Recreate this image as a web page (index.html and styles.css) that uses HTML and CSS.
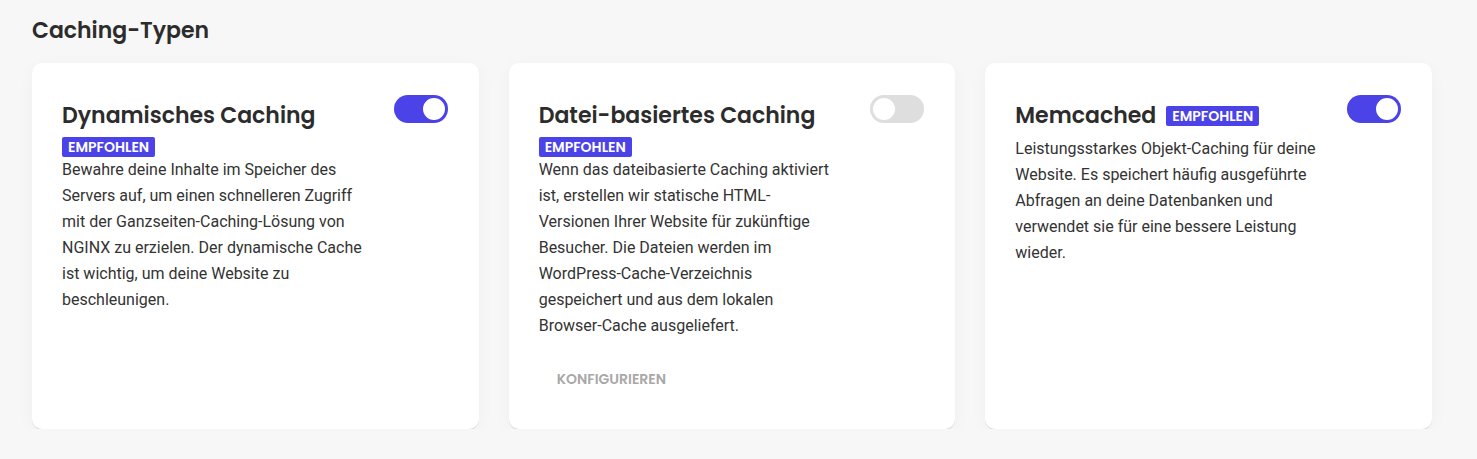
FILE: index.html
```html
<!DOCTYPE html>
<html lang="de">
<head>
<meta charset="utf-8">
<title>Caching-Typen</title>
<link rel="stylesheet" href="styles.css">
</head>
<body>
<main class="page">
  <h2 class="page-title">Caching-Typen</h2>
  <div class="cards">
    <section class="card">
      <div class="card-top">
        <div class="card-head">
          <h3 class="card-title">Dynamisches Caching</h3>
          <span class="badge">EMPFOHLEN</span>
        </div>
        <span class="toggle on"><span class="knob"></span></span>
      </div>
      <p class="card-text">Bewahre deine Inhalte im Speicher des Servers auf, um einen schnelleren Zugriff mit der Ganzseiten-Caching-Lösung von NGINX zu erzielen. Der dynamische Cache ist wichtig, um deine Website zu beschleunigen.</p>
    </section>
    <section class="card">
      <div class="card-top">
        <div class="card-head">
          <h3 class="card-title">Datei-basiertes Caching</h3>
          <span class="badge">EMPFOHLEN</span>
        </div>
        <span class="toggle"><span class="knob"></span></span>
      </div>
      <p class="card-text">Wenn das dateibasierte Caching aktiviert ist, erstellen wir statische HTML-Versionen Ihrer Website für zukünftige Besucher. Die Dateien werden im WordPress-Cache-Verzeichnis gespeichert und aus dem lokalen Browser-Cache ausgeliefert.</p>
      <div class="card-actions"><button class="btn-config" type="button">KONFIGURIEREN</button></div>
    </section>
    <section class="card">
      <div class="card-top">
        <div class="card-head">
          <h3 class="card-title">Memcached</h3>
          <span class="badge">EMPFOHLEN</span>
        </div>
        <span class="toggle on"><span class="knob"></span></span>
      </div>
      <p class="card-text">Leistungsstarkes Objekt-Caching für deine Website. Es speichert häufig ausgeführte Abfragen an deine Datenbanken und verwendet sie für eine bessere Leistung wieder.</p>
    </section>
  </div>
</main>
</body>
</html>
```

FILE: styles.css
```css
* { box-sizing: border-box; }
html, body { margin: 0; padding: 0; }
body {
  background: #f7f7f7;
  font-family: Roboto, "Liberation Sans", sans-serif;
  color: #333;
}
.page {
  padding: 16px 45px 0 32px;
}
.page-title {
  margin: 0;
  font-family: "Poppins", "Open Sans", sans-serif;
  font-weight: 600;
  font-size: 22px;
  line-height: 30px;
  color: #2c2c2c;
}
.cards {
  margin-top: 17px;
  display: grid;
  grid-template-columns: repeat(3, 1fr);
  column-gap: 30px;
}
.card {
  background: #fff;
  border-radius: 10px;
  padding: 32px 31px 30px 30px;
  min-height: 366px;
  box-shadow: 0 1px 0 #dcdcdc, 0 4px 18px rgba(0, 0, 0, 0.035);
}
.card-top {
  display: flex;
  justify-content: space-between;
  align-items: flex-start;
  gap: 20px;
}
.card-head {
  display: flex;
  flex-wrap: wrap;
  align-items: center;
  column-gap: 10px;
  row-gap: 1px;
}
.card-title {
  margin: 0;
  font-family: "Poppins", "Open Sans", sans-serif;
  font-weight: 600;
  font-size: 22px;
  line-height: 41px;
  color: #2c2c2c;
}
.badge {
  display: inline-block;
  background: #4b43e8;
  color: #fff;
  font-family: "Poppins", "Open Sans", sans-serif;
  font-weight: 600;
  font-size: 14px;
  line-height: 20px;
  height: 20px;
  padding: 0 6px;
  border-radius: 2px;
}
.toggle {
  flex: none;
  position: relative;
  width: 54px;
  height: 28px;
  border-radius: 14px;
  background: #dedede;
}
.toggle .knob {
  position: absolute;
  top: 1px;
  left: 1px;
  width: 26px;
  height: 26px;
  border-radius: 50%;
  background: #fff;
  border: 2px solid #dedede;
}
.toggle.on { background: #4b43e8; }
.toggle.on .knob {
  left: 27px;
  border-color: #4b43e8;
}
.card-text {
  margin: 0;
  max-width: 300.5px;
  font-size: 16px;
  line-height: 26px;
  color: #333;
}
.card-actions {
  margin-top: 20px;
}
.btn-config {
  height: 40px;
  padding: 0 18px;
  border: 0;
  background: transparent;
  font-family: "Poppins", "Open Sans", sans-serif;
  font-weight: 600;
  font-size: 14px;
  color: #a8a8a8;
  cursor: pointer;
}
```
